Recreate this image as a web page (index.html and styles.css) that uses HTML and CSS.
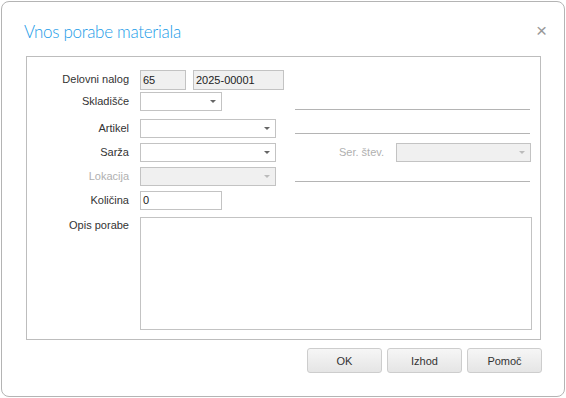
FILE: index.html
```html
<!DOCTYPE html>
<html lang="sl">
<head>
	<meta charset="utf-8">
	<title>Vnos porabe materiala</title>
	<link rel="stylesheet" href="styles.css">
</head>
<body>

	<div class="dialog">
		<div class="header">
			<span class="title">Vnos porabe materiala</span>
			<span class="close">&#215;</span>
		</div>

		<div class="panel">
			<div class="row row-first">
				<div class="left">
					<label class="lbl">Delovni nalog</label>
					<span class="field ro w46">65</span>
					<span class="field ro w91 ml7">2025-00001</span>
				</div>
			</div>

			<div class="row row-store">
				<div class="left">
					<label class="lbl">Skladišče</label>
					<span class="field combo w82"><i class="arrow"></i></span>
				</div>
				<div class="line line-store"></div>
			</div>

			<div class="row">
				<div class="left">
					<label class="lbl">Artikel</label>
					<span class="field combo w136"><i class="arrow"></i></span>
				</div>
				<div class="line"></div>
			</div>

			<div class="row">
				<div class="left">
					<label class="lbl">Sarža</label>
					<span class="field combo w136"><i class="arrow"></i></span>
				</div>
				<div class="right">
					<label class="lbl-right off">Ser. štev.</label>
					<span class="field combo ro w135"><i class="arrow off"></i></span>
				</div>
			</div>

			<div class="row">
				<div class="left">
					<label class="lbl off">Lokacija</label>
					<span class="field combo ro w136"><i class="arrow off"></i></span>
				</div>
				<div class="line"></div>
			</div>

			<div class="row row-qty">
				<div class="left">
					<label class="lbl">Količina</label>
					<span class="field w82">0</span>
				</div>
			</div>

			<div class="row row-memo">
				<label class="lbl">Opis porabe</label>
				<div class="memo"></div>
			</div>
		</div>

		<div class="buttons">
			<button class="btn">OK</button>
			<button class="btn">Izhod</button>
			<button class="btn">Pomoč</button>
		</div>
	</div>

</body>
</html>
```

FILE: styles.css
```css
html, body {
	margin: 0;
	padding: 0;
	background: #fff;
}

body {
	padding: 1px;
	font-family: "Liberation Sans", Arial, sans-serif;
	font-size: 11px;
	color: #333;
}

.dialog {
	box-sizing: border-box;
	width: 564px;
	height: 396px;
	border: 1px solid #b4b4b4;
	border-radius: 8px;
	background: #fff;
}

.header {
	display: flex;
	justify-content: space-between;
	align-items: center;
	height: 54px;
	padding: 0 17px 0 22px;
	box-sizing: border-box;
}

.title {
	font-family: Lato, "Liberation Sans", sans-serif;
	font-size: 17px;
	font-weight: 300;
	letter-spacing: -0.3px;
	color: #1a9be8;
	padding-top: 4px;
}

.close {
	font-size: 19px;
	color: #999;
	padding-top: 4px;
}

.panel {
	box-sizing: border-box;
	width: 515px;
	height: 284px;
	margin-left: 24px;
	border: 1px solid #bdbdbd;
	padding: 13px 0 0 0;
}

.row {
	display: flex;
	height: 19px;
	margin-bottom: 5px;
}

.row-first {
	height: 20px;
	margin-bottom: 2px;
}

.row-store {
	margin-bottom: 8px;
}

.row-qty {
	margin-bottom: 6px;
}

.row-memo {
	height: 113px;
}

.left {
	display: flex;
	width: 268px;
	flex-shrink: 0;
}

.lbl {
	width: 102px;
	margin-right: 11px;
	text-align: right;
	line-height: 19px;
	flex-shrink: 0;
}

.off {
	color: #b0b0b0;
}

.field {
	position: relative;
	box-sizing: border-box;
	height: 19px;
	border: 1px solid #c3c3c3;
	background: #fff;
	padding-left: 2px;
	line-height: 17px;
	color: #222;
}

.row-first .field {
	height: 20px;
	line-height: 18px;
}

.ro {
	background: #f0f0f0;
}

.w46 { width: 46px; }
.w91 { width: 91px; }
.w82 { width: 82px; }
.w135 { width: 135px; }
.w136 { width: 136px; }
.ml7 { margin-left: 7px; }

.arrow {
	position: absolute;
	right: 5px;
	top: 7px;
	width: 0;
	height: 0;
	border-left: 3px solid transparent;
	border-right: 3px solid transparent;
	border-top: 3px solid #666;
}

.arrow.off {
	border-top-color: #bbb;
}

.line {
	align-self: flex-end;
	width: 235px;
	height: 0;
	margin-bottom: 4px;
	border-bottom: 1px solid #b4b4b4;
}

.line-store {
	margin-bottom: 1px;
}

.right {
	display: flex;
	width: 236px;
}

.lbl-right {
	width: 89px;
	margin-right: 12px;
	text-align: right;
	line-height: 19px;
}

.memo {
	box-sizing: border-box;
	width: 392px;
	height: 113px;
	border: 1px solid #c3c3c3;
	margin-top: 1px;
}

.buttons {
	display: flex;
	justify-content: flex-end;
	gap: 5px;
	width: 540px;
	margin-top: 8px;
}

.btn {
	box-sizing: border-box;
	width: 75px;
	height: 25px;
	border: 1px solid #cdcdcd;
	border-radius: 3px;
	background: linear-gradient(#f6f6f6, #e5e5e5);
	font-family: "Liberation Sans", Arial, sans-serif;
	font-size: 11px;
	color: #333;
	padding: 0;
}
```
